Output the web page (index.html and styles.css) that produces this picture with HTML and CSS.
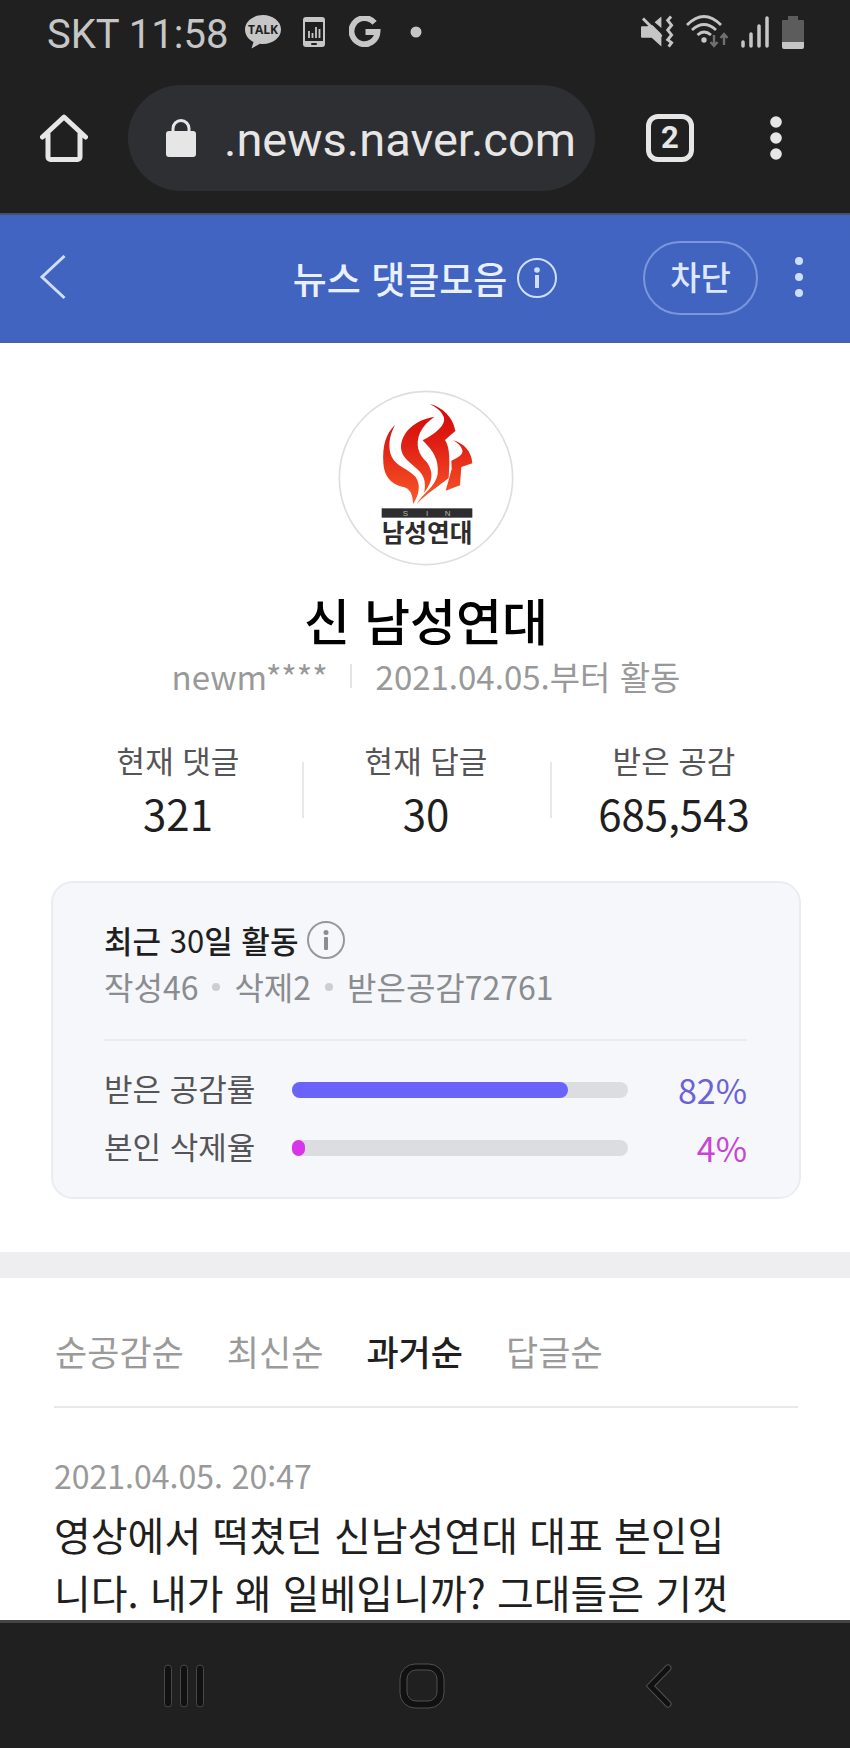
FILE: index.html
```html
<!DOCTYPE html>
<html lang="ko">
<head>
<meta charset="utf-8">
<meta name="viewport" content="width=device-width, initial-scale=1">
<title>뉴스 댓글모음</title>
<link rel="stylesheet" href="styles.css">
</head>
<body>
<div class="status-bar">
  <div class="status-left">
    <span class="clock">SKT 11:58</span>
    <svg class="icon-talk" width="36" height="34" viewBox="0 0 36 34" aria-hidden="true">
      <path fill="#c6c6c6" d="M18 0C8 0 0 6.500 0 14.500c0 5.500 3.500 10 8.500 12.500L6.500 33.500 15 28.800c1 .2 2 .2 3 .2 10 0 18-6.500 18-14.500S28 0 18 0Z"/>
      <text x="18" y="19" text-anchor="middle" class="talk-text">TALK</text>
    </svg>
    <svg class="icon-phone" width="22" height="30" viewBox="0 0 22 30" aria-hidden="true">
      <rect width="22" height="30" rx="3" fill="#c6c6c6"/>
      <rect x="2" y="5" width="18" height="19" fill="#202020"/>
      <path d="M6 14v7M9.500 16v5M13 10v11M16.500 12v9" stroke="#c6c6c6" stroke-width="1.800"/>
      <rect x="8" y="26" width="6" height="2" rx="1" fill="#202020"/>
    </svg>
    <svg class="icon-g" width="32" height="32" viewBox="0 0 32 32" aria-hidden="true">
      <path d="M25.500 6.800A13 13 0 1 0 28.500 16H16.500" fill="none" stroke="#c6c6c6" stroke-width="5.800"/>
    </svg>
    <svg width="12" height="12" viewBox="0 0 12 12" aria-hidden="true"><circle cx="6" cy="6" r="5.500" fill="#c6c6c6"/></svg>
  </div>
  <div class="status-right">
    <svg width="33" height="34" viewBox="0 0 34 34" aria-hidden="true">
      <path fill="#c6c6c6" d="M1 11h5l6-1 9 9v13l-10-9H1a1 1 0 0 1-1-1v-10a1 1 0 0 1 1-1ZM14 7l7-6v12Z"/>
      <path d="M2 3l19 19" stroke="#c6c6c6" stroke-width="3"/>
      <path d="M31 1l-3.500 4 4 5-4 5 4 5-4 5 4 3-3 4" fill="none" stroke="#c6c6c6" stroke-width="3"/>
    </svg>
    <svg width="43" height="34" viewBox="0 0 43 34" aria-hidden="true">
      <g fill="none" stroke="#c6c6c6" stroke-width="2.800">
        <path d="M1 10Q18-7 35 10"/><path d="M6 15Q18 4 30 15"/><path d="M11.500 20Q18 14 25 20"/>
      </g>
      <circle cx="18" cy="25" r="2.700" fill="#c6c6c6"/>
      <path d="M28 20v10M24.500 27l3.500 4 3.500-4M38 30V20M34.500 23l3.500-4 3.500 4" fill="none" stroke="#707070" stroke-width="2.400"/>
    </svg>
    <svg width="29" height="32" viewBox="0 0 29 32" aria-hidden="true">
      <path d="M2 26v4M10 18v12M18 10v20M26 2v28" stroke="#c6c6c6" stroke-width="3.500" stroke-linecap="round"/>
    </svg>
    <svg width="22" height="33" viewBox="0 0 22 33" aria-hidden="true">
      <path fill="#5c5c5c" d="M6 0h10v4h5a1 1 0 0 1 1 1v21H0V5a1 1 0 0 1 1-1h5Z"/>
      <path fill="#c6c6c6" d="M0 26h22v5a2 2 0 0 1-2 2H2a2 2 0 0 1-2-2Z"/>
    </svg>
  </div>
</div>

<div class="browser-bar">
  <button class="plain-button" type="button" aria-label="홈">
    <svg width="48" height="50" viewBox="0 0 48 50" aria-hidden="true">
      <path d="M2.500 24 24 4l21.500 20M8 21v23a2.500 2.500 0 0 0 2.500 2.500h27A2.500 2.500 0 0 0 40 44V21" fill="none" stroke="#e6e6e6" stroke-width="5" stroke-linecap="round" stroke-linejoin="round"/>
    </svg>
  </button>
  <div class="address">
    <svg width="30" height="38" viewBox="0 0 30 38" aria-hidden="true">
      <path d="M7 14V9.500a8 8 0 0 1 16 0V14" fill="none" stroke="#e6e6e6" stroke-width="3"/>
      <rect y="12" width="30" height="26" rx="3" fill="#e6e6e6"/>
    </svg>
    <input class="address-input" type="text" value=".news.naver.com" aria-label="주소">
  </div>
  <button class="tab-count" type="button" aria-label="탭 2개">2</button>
  <button class="plain-button" type="button" aria-label="메뉴">
    <svg width="12" height="44" viewBox="0 0 12 44" aria-hidden="true"><g fill="#e6e6e6"><circle cx="6" cy="6" r="5.800"/><circle cx="6" cy="22" r="5.800"/><circle cx="6" cy="38" r="5.800"/></g></svg>
  </button>
</div>

<header class="page-header">
  <button class="plain-button back" type="button" aria-label="뒤로">
    <svg width="28" height="46" viewBox="0 0 28 46" aria-hidden="true"><path d="M25.500 1 3 22l22.500 21" fill="none" stroke="#cfddff" stroke-width="3"/></svg>
  </button>
  <div class="header-title">
    <h1>뉴스 댓글모음</h1>
    <button class="plain-button" type="button" aria-label="안내">
      <svg width="40" height="40" viewBox="0 0 40 40" aria-hidden="true"><circle cx="20" cy="20" r="19" fill="none" stroke="#cfddff" stroke-width="2"/><circle cx="20" cy="12" r="2.800" fill="#cfddff"/><rect x="18" y="17" width="4" height="13" fill="#cfddff"/></svg>
    </button>
  </div>
  <div class="header-actions">
    <button class="block-button" type="button">차단</button>
    <button class="plain-button" type="button" aria-label="더보기">
      <svg width="8" height="42" viewBox="0 0 8 42" aria-hidden="true"><g fill="#cfddff"><circle cx="4" cy="4" r="4"/><circle cx="4" cy="20" r="4"/><circle cx="4" cy="36" r="4"/></g></svg>
    </button>
  </div>
</header>

<main>
  <section class="profile">
    <svg class="avatar" width="176" height="176" viewBox="39 32 528 528" role="img" aria-label="프로필 이미지">
      <defs><linearGradient id="flame" gradientUnits="userSpaceOnUse" x1="0" y1="75" x2="0" y2="376"><stop offset="0" stop-color="#d30808"/><stop offset=".4" stop-color="#df2014"/><stop offset="1" stop-color="#fb5a28"/></linearGradient></defs>
      <circle cx="303" cy="296" r="260" fill="#fff" stroke="#dedee0" stroke-width="5"/>
      <g fill="url(#flame)">
        <path d="M210 137C182 164 172 200 175 250C178 298 205 316 235 323C256 328 264 346 264 374C281 350 289 318 272 293C250 268 215 262 200 232C188 205 192 170 210 137Z"/>
        <path d="M328 113C270 121 228 160 228 205C231 250 290 262 298 302C301 318 300 330 297 340C326 306 325 275 305 248C280 225 270 195 285 160C295 140 310 125 328 113Z"/>
        <path d="M315 75C352 83 385 115 391 155L360 182C376 205 374 250 371 296C345 318 300 345 274 376C290 346 332 322 338 285C342 240 325 215 293 183C332 162 362 138 357 115C350 95 335 85 315 75Z"/>
        <path d="M385 183C415 192 440 215 442 252L409 263L405 318L362 334L380 270L379 244C401 235 415 225 412 212C408 200 398 190 385 183Z"/>
      </g>
      <rect x="170" y="387" width="272" height="28" fill="#2d2d2f"/>
      <text text-anchor="middle"><tspan class="avatar-sub" x="241" y="410">S</tspan><tspan class="avatar-sub" x="306" y="410">I</tspan><tspan class="avatar-sub" x="368" y="410">N</tspan><tspan class="avatar-name" x="306" y="487">남성연대</tspan></text>
    </svg>
    <h2 class="name">신 남성연대</h2>
    <div class="account"><span>newm****</span><span class="since">2021.04.05.부터 활동</span></div>
    <dl class="stats">
      <div><dt>현재 댓글</dt><dd>321</dd></div>
      <div><dt>현재 답글</dt><dd>30</dd></div>
      <div><dt>받은 공감</dt><dd>685,543</dd></div>
    </dl>
    <section class="activity">
      <div class="activity-title">
        <h3>최근 <span>30</span>일 활동</h3>
        <button class="plain-button" type="button" aria-label="활동 안내">
          <svg width="38" height="38" viewBox="0 0 38 38" aria-hidden="true"><circle cx="19" cy="19" r="18" fill="none" stroke="#97989b" stroke-width="2"/><circle cx="19" cy="11.500" r="2.500" fill="#8c8d90"/><rect x="17" y="16" width="4" height="13" rx="1" fill="#8c8d90"/></svg>
        </button>
      </div>
      <ul class="activity-summary"><li>작성46</li><li>삭제2</li><li>받은공감72761</li></ul>
      <div class="rates">
        <div class="rate liked"><span class="rate-label">받은 공감률</span><div class="track"><div class="fill" style="width:82%"></div></div><span class="rate-value">82%</span></div>
        <div class="rate deleted"><span class="rate-label">본인 삭제율</span><div class="track"><div class="fill" style="width:4%"></div></div><span class="rate-value">4%</span></div>
      </div>
    </section>
  </section>

  <section class="comments">
    <nav class="sort" aria-label="정렬">
      <a href="#likes">순공감순</a><a href="#newest">최신순</a><a href="#oldest" class="active" aria-current="true">과거순</a><a href="#replies">답글순</a>
    </nav>
    <article>
      <time class="date" datetime="2021-04-05T20:47">2021.04.05. 20:47</time>
      <p class="comment">영상에서 떡쳤던 신남성연대 대표 본인입니다. 내가 왜 일베입니까? 그대들은 기껏</p>
    </article>
  </section>
</main>

<nav class="system-nav" aria-label="시스템">
  <button class="plain-button" type="button" aria-label="최근 앱">
    <svg width="42" height="46" viewBox="0 0 42 46" aria-hidden="true"><g fill="#111" stroke="#484848"><rect x="1.500" y="2" width="7" height="42" rx="3.500"/><rect x="17.500" y="2" width="7" height="42" rx="3.500"/><rect x="33.500" y="2" width="7" height="42" rx="3.500"/></g></svg>
  </button>
  <button class="plain-button" type="button" aria-label="홈 화면">
    <svg width="46" height="46" viewBox="0 0 46 46" aria-hidden="true"><g stroke="#505050"><rect x="1" y="1" width="44" height="44" rx="15" fill="#111"/><rect x="8" y="7" width="30" height="31" rx="9" fill="#202020"/></g></svg>
  </button>
  <button class="plain-button" type="button" aria-label="뒤로 가기">
    <svg width="28" height="46" viewBox="0 0 28 46" aria-hidden="true"><g fill="none" stroke-linecap="round" stroke-linejoin="miter"><path d="M23 5 5.500 23 23 41" stroke="#505050" stroke-width="7"/><path d="M23 5 5.500 23 23 41" stroke="#111" stroke-width="5"/></g></svg>
  </button>
</nav>
</body>
</html>
```
FILE: styles.css
```css
* { box-sizing: border-box; }

body {
  margin: 0;
  min-height: 100vh;
  display: flex;
  flex-direction: column;
  background: #fff;
  color: #1f1f21;
  font-family: "Noto Sans CJK KR", sans-serif;
}

h1, h2, h3, p, dl, dd, ul { margin: 0; padding: 0; }
svg { display: block; flex: none; }
button { font-family: inherit; cursor: pointer; }

.plain-button {
  flex: none;
  padding: 0;
  border: 0;
  background: none;
}

/* Phone status bar */
.status-bar {
  display: flex;
  justify-content: space-between;
  align-items: center;
  height: 64px;
  padding: 0 46px 0 47px;
  background: #202020;
}
.status-left, .status-right { display: flex; align-items: center; }
.clock {
  padding-top: 5px;
  margin-right: 17px;
  color: #c6c6c6;
  font: 40px/48px Roboto, sans-serif;
  white-space: nowrap;
}
.talk-text { font: bold 12px "Open Sans", sans-serif; fill: #202020; }
.icon-phone { margin-left: 22px; }
.icon-g { margin: 0 29px 0 24px; }
.status-right { gap: 12px; }

/* Browser toolbar */
.browser-bar {
  display: flex;
  align-items: center;
  height: 151px;
  padding: 0 68px 2px 40px;
  background: #202020;
  border-bottom: 2px solid #46506a;
}
.address {
  flex: 1;
  min-width: 0;
  display: flex;
  align-items: center;
  gap: 28px;
  height: 106px;
  margin: 0 51px 0 40px;
  padding: 0 16px 0 38px;
  border-radius: 53px;
  background: #2e2f32;
}
.address-input {
  flex: 1;
  min-width: 0;
  padding: 5px 0 0;
  border: 0;
  background: none;
  color: #e6e6e6;
  font: 47px/56px Roboto, sans-serif;
}
.tab-count {
  flex: none;
  width: 48px;
  height: 48px;
  margin-right: 76px;
  padding: 0;
  border: 5px solid #e6e6e6;
  border-radius: 12px;
  background: none;
  color: #e6e6e6;
  font: bold 31px/38px Roboto, sans-serif;
}

/* Blue page header */
.page-header {
  display: grid;
  grid-template-columns: 1fr auto 1fr;
  align-items: center;
  height: 128px;
  padding: 0 47px 0 39px;
  background: #4064bf;
  border-bottom: 2px solid #4a60a8;
}
.back { justify-self: start; }
.header-title { display: flex; align-items: center; gap: 10px; padding-left: 8px; }
.header-title h1 {
  color: #e9f0ff;
  font-size: 37px;
  line-height: 52px;
  font-weight: 500;
}
.header-actions { display: flex; justify-content: flex-end; align-items: center; gap: 37px; }
.block-button {
  width: 115px;
  height: 74px;
  padding: 0 0 4px;
  border: 2px solid #7b96dc;
  border-radius: 37px;
  background: none;
  color: #dde7ff;
  font-size: 33px;
  font-weight: 500;
}

/* Profile */
.profile {
  display: flex;
  flex-direction: column;
  align-items: center;
  padding: 47px 49px 53px 51px;
  border-bottom: 26px solid #eeeef1;
}
.avatar-name { font: bold 74px "Noto Sans CJK KR", sans-serif; fill: #2d2d2f; }
.avatar-sub { font: 24px "Liberation Sans", sans-serif; fill: #b5b5b5; }
.name {
  margin-top: 23px;
  color: #000;
  font-size: 50px;
  line-height: 60px;
  font-weight: 500;
}
.account {
  display: flex;
  align-items: center;
  margin-top: 7px;
  color: #999;
  font-size: 33px;
  line-height: 40px;
}
.since {
  display: flex;
  align-items: center;
}
.since::before {
  content: "";
  width: 2px;
  height: 24px;
  margin: 0 24px 0 22px;
  background: #e3e3e5;
}
.stats {
  display: grid;
  grid-template-columns: repeat(3, 1fr);
  align-self: stretch;
  margin: 44px 3px 0;
  text-align: center;
}
.stats > div { position: relative; }
.stats > div + div::before {
  content: "";
  position: absolute;
  left: 0;
  top: 22px;
  width: 2px;
  height: 56px;
  background: #e9e9eb;
}
.stats dt { color: #555557; font-size: 31px; line-height: 40px; }
.stats dd { margin-top: 7px; font-size: 42px; line-height: 52px; }

/* Recent activity card */
.activity {
  align-self: stretch;
  margin-top: 42px;
  padding: 35px 52px 20px 51px;
  border: 2px solid #ebecf2;
  border-radius: 22px;
  background: #f5f7fb;
}
.activity-title { display: flex; align-items: center; gap: 9px; }
.activity-title h3 { font-size: 31px; line-height: 44px; font-weight: 500; }
.activity-title h3 span { font-weight: 400; }
.activity-summary {
  display: flex;
  margin-top: 2px;
  padding-bottom: 31px;
  border-bottom: 2px solid #eaebf0;
  list-style: none;
  color: #8b8c8f;
  font-size: 32px;
  line-height: 44px;
}
.activity-summary li { display: flex; align-items: center; }
.activity-summary li + li::before {
  content: "";
  width: 8px;
  height: 8px;
  margin: 2px 14px 0;
  border-radius: 50%;
  background: #cdced0;
}
.rates { padding-top: 20px; }
.rate { display: flex; align-items: center; height: 58px; }
.rate-label { width: 188px; padding-bottom: 4px; color: #555557; font-size: 31px; line-height: 44px; }
.track {
  flex: 1;
  height: 16px;
  border-radius: 8px;
  background: #dcdde1;
}
.fill { height: 100%; border-radius: 8px; }
.rate-value { width: 119px; text-align: right; font-size: 34px; line-height: 44px; }
.liked .fill { background: #6a63f9; }
.liked .rate-value { color: #6b62d9; }
.deleted .fill { background: #d834e8; }
.deleted .rate-value { color: #c747d2; }

/* Comment list */
.comments { padding: 46px 52px 0 54px; }
.sort {
  display: flex;
  gap: 43px;
  padding: 0 1px 28px;
  border-bottom: 2px solid #e9e9ea;
}
.sort a {
  color: #9a9a9a;
  font-size: 35px;
  line-height: 54px;
  text-decoration: none;
}
.sort .active { color: #1f1f21; font-weight: 500; }
.date {
  display: block;
  margin-top: 47px;
  color: #999;
  font-size: 32px;
  line-height: 40px;
}
.comment {
  margin: 10px 0 -5px;
  padding-right: 60px;
  font-size: 40px;
  line-height: 58px;
  word-break: break-all;
}

/* Phone navigation */
.system-nav {
  display: flex;
  justify-content: space-between;
  align-items: center;
  height: 128px;
  margin-top: auto;
  padding: 0 168px 0 161px;
  border-top: 3px solid #444546;
  background: #202020;
}
.system-nav .plain-button {
  display: flex;
  justify-content: center;
  width: 46px;
}
```
